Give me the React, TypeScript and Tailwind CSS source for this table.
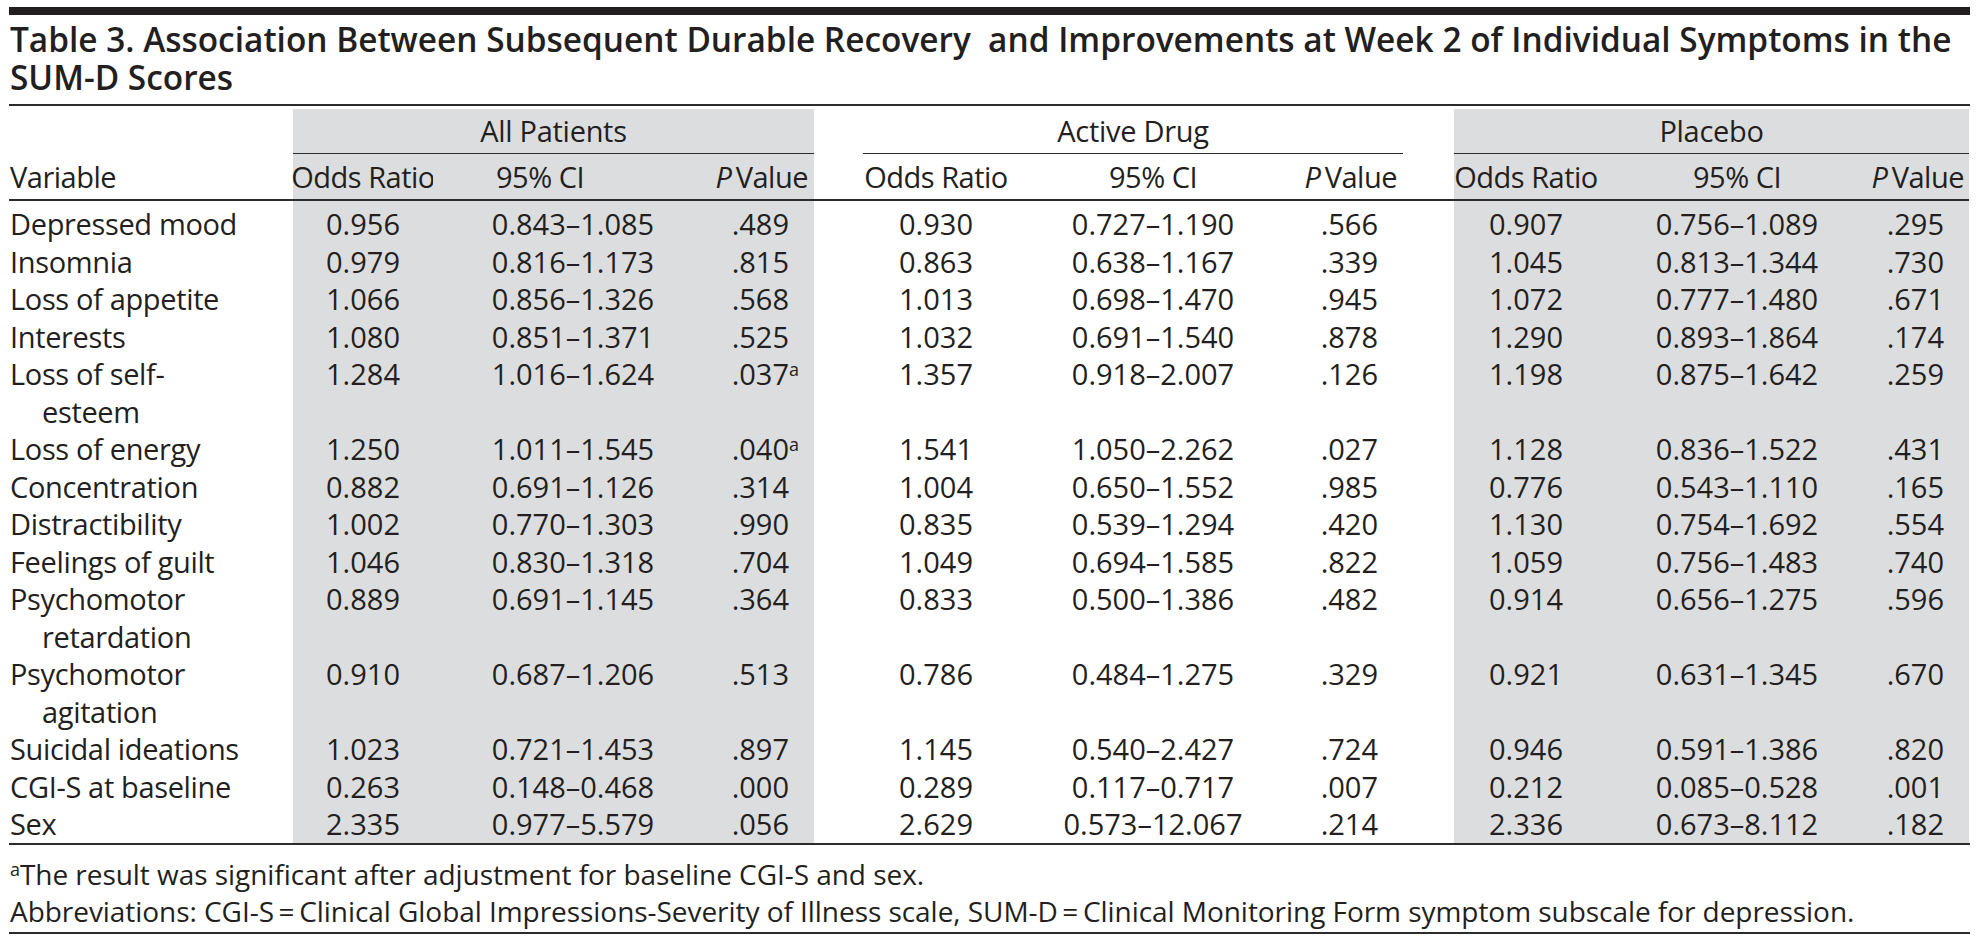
const GRAY = "bg-[#dcdddf]";

type Group = [string, string, string];

type Row = {
  label: string[];
  all: Group;
  active: Group;
  placebo: Group;
};

const rows: Row[] = [
  { label: ["Depressed mood"], all: ["0.956", "0.843–1.085", ".489"], active: ["0.930", "0.727–1.190", ".566"], placebo: ["0.907", "0.756–1.089", ".295"] },
  { label: ["Insomnia"], all: ["0.979", "0.816–1.173", ".815"], active: ["0.863", "0.638–1.167", ".339"], placebo: ["1.045", "0.813–1.344", ".730"] },
  { label: ["Loss of appetite"], all: ["1.066", "0.856–1.326", ".568"], active: ["1.013", "0.698–1.470", ".945"], placebo: ["1.072", "0.777–1.480", ".671"] },
  { label: ["Interests"], all: ["1.080", "0.851–1.371", ".525"], active: ["1.032", "0.691–1.540", ".878"], placebo: ["1.290", "0.893–1.864", ".174"] },
  { label: ["Loss of self-", "esteem"], all: ["1.284", "1.016–1.624", ".037a"], active: ["1.357", "0.918–2.007", ".126"], placebo: ["1.198", "0.875–1.642", ".259"] },
  { label: ["Loss of energy"], all: ["1.250", "1.011–1.545", ".040a"], active: ["1.541", "1.050–2.262", ".027"], placebo: ["1.128", "0.836–1.522", ".431"] },
  { label: ["Concentration"], all: ["0.882", "0.691–1.126", ".314"], active: ["1.004", "0.650–1.552", ".985"], placebo: ["0.776", "0.543–1.110", ".165"] },
  { label: ["Distractibility"], all: ["1.002", "0.770–1.303", ".990"], active: ["0.835", "0.539–1.294", ".420"], placebo: ["1.130", "0.754–1.692", ".554"] },
  { label: ["Feelings of guilt"], all: ["1.046", "0.830–1.318", ".704"], active: ["1.049", "0.694–1.585", ".822"], placebo: ["1.059", "0.756–1.483", ".740"] },
  { label: ["Psychomotor", "retardation"], all: ["0.889", "0.691–1.145", ".364"], active: ["0.833", "0.500–1.386", ".482"], placebo: ["0.914", "0.656–1.275", ".596"] },
  { label: ["Psychomotor", "agitation"], all: ["0.910", "0.687–1.206", ".513"], active: ["0.786", "0.484–1.275", ".329"], placebo: ["0.921", "0.631–1.345", ".670"] },
  { label: ["Suicidal ideations"], all: ["1.023", "0.721–1.453", ".897"], active: ["1.145", "0.540–2.427", ".724"], placebo: ["0.946", "0.591–1.386", ".820"] },
  { label: ["CGI-S at baseline"], all: ["0.263", "0.148–0.468", ".000"], active: ["0.289", "0.117–0.717", ".007"], placebo: ["0.212", "0.085–0.528", ".001"] },
  { label: ["Sex"], all: ["2.335", "0.977–5.579", ".056"], active: ["2.629", "0.573–12.067", ".214"], placebo: ["2.336", "0.673–8.112", ".182"] },
];

const PValue = ({ value }: { value: string }) => {
  const flagged = value.endsWith("a");
  const num = flagged ? value.slice(0, -1) : value;

  return (
    <span className="relative">
      {num}
      {flagged ? (
        <span className="absolute left-full top-[6px] text-[18px] leading-none">a</span>
      ) : null}
    </span>
  );
};

const GroupCells = ({ values, shaded, pad }: { values: Group; shaded: boolean; pad: string }) => {
  const bg = shaded ? GRAY : "";
  return (
    <>
      <div className={`${bg} ${pad} whitespace-nowrap text-center`}>{values[0]}</div>
      <div className={`${bg} ${pad} whitespace-nowrap text-center`}>{values[1]}</div>
      <div className={`${bg} ${pad} whitespace-nowrap pr-[25px] text-right`}>
        <PValue value={values[2]} />
      </div>
    </>
  );
};

const PHead = () => (
  <span className="whitespace-nowrap">
    <i>P</i>
    {"\u2009"}Value
  </span>
);

const HEAD = "flex h-[47px] items-center whitespace-nowrap border-b-2 border-[#2b2b2b] tracking-[-0.5px]";

export default function App() {
  return (
    <div className="h-[946px] w-[1979px] overflow-hidden bg-white pl-[9px] pt-[7px] font-['Open_Sans',sans-serif] text-[29px] leading-[37.5px] text-[#231f20]">
      <div className="w-[1961px]">
        <div className="h-[8px] bg-[#231f20]" />

        <div className="mt-[5px] pl-[1px] text-[33.4px] font-semibold leading-[38px]">
          <div className="whitespace-nowrap">
            Table 3. Association Between Subsequent Durable Recovery{"\u00a0"} and Improvements at Week 2 of Individual
            Symptoms in the
          </div>
          <div>SUM-D Scores</div>
        </div>

        <div className="mt-[8px] h-[2px] bg-[#2b2b2b]" />

        <div className="mt-[3px] grid grid-cols-[284px_140px_280px_101px_49px_146px_288px_106px_51px_144px_278px_93px]">
          {/* group headers */}
          <div className="h-[45px]" />
          <div className={`col-span-3 flex h-[45px] items-center justify-center border-b border-[#2b2b2b] tracking-[-0.3px] ${GRAY}`}>
            All Patients
          </div>
          <div />
          <div className="col-span-3 flex h-[45px] items-center justify-center border-b border-[#2b2b2b] tracking-[-0.3px]">
            Active Drug
          </div>
          <div />
          <div className={`col-span-3 flex h-[45px] items-center justify-center border-b border-[#2b2b2b] tracking-[-0.3px] ${GRAY}`}>
            Placebo
          </div>

          {/* column headers */}
          <div className={`${HEAD} pl-[1px]`}>Variable</div>
          <div className={`${HEAD} justify-center ${GRAY}`}>Odds Ratio</div>
          <div className={`${HEAD} justify-center pr-[66px] ${GRAY}`}>95% CI</div>
          <div className={`${HEAD} justify-end pr-[6px] ${GRAY}`}>
            <PHead />
          </div>
          <div className={HEAD} />
          <div className={`${HEAD} justify-center`}>Odds Ratio</div>
          <div className={`${HEAD} justify-center`}>95% CI</div>
          <div className={`${HEAD} justify-end pr-[6px]`}>
            <PHead />
          </div>
          <div className={HEAD} />
          <div className={`${HEAD} justify-center ${GRAY}`}>Odds Ratio</div>
          <div className={`${HEAD} justify-center ${GRAY}`}>95% CI</div>
          <div className={`${HEAD} justify-end pr-[5px] ${GRAY}`}>
            <PHead />
          </div>

          {/* body */}
          {rows.map((row, index) => {
            const pad = index === 0 ? "pt-[4px]" : "";
            return (
              <div key={row.label.join(" ")} className="contents">
                <div className={`${pad} pl-[1px] tracking-[-0.35px]`}>
                  {row.label.map((line, i) => (
                    <div key={line} className={i > 0 ? "pl-[32px]" : ""}>
                      {line}
                    </div>
                  ))}
                </div>
                <GroupCells values={row.all} shaded pad={pad} />
                <div className={pad} />
                <GroupCells values={row.active} shaded={false} pad={pad} />
                <div className={pad} />
                <GroupCells values={row.placebo} shaded pad={pad} />
              </div>
            );
          })}
        </div>

        <div className="h-[2px] bg-[#2b2b2b]" />

        <div className="mt-[11px] pl-[1px] text-[28px] leading-[37px] tracking-[-0.05px]">
          <div>
            <span className="relative top-[-9px] text-[18px] leading-none">a</span>
            The result was significant after adjustment for baseline CGI-S and sex.
          </div>
          <div>
            Abbreviations: CGI-S{"\u2009=\u2009"}Clinical Global Impressions-Severity of Illness scale, SUM-D
            {"\u2009=\u2009"}Clinical Monitoring Form symptom subscale for depression.
          </div>
        </div>

        <div className="mt-[2px] h-[2px] bg-[#2b2b2b]" />
      </div>
    </div>
  );
}
